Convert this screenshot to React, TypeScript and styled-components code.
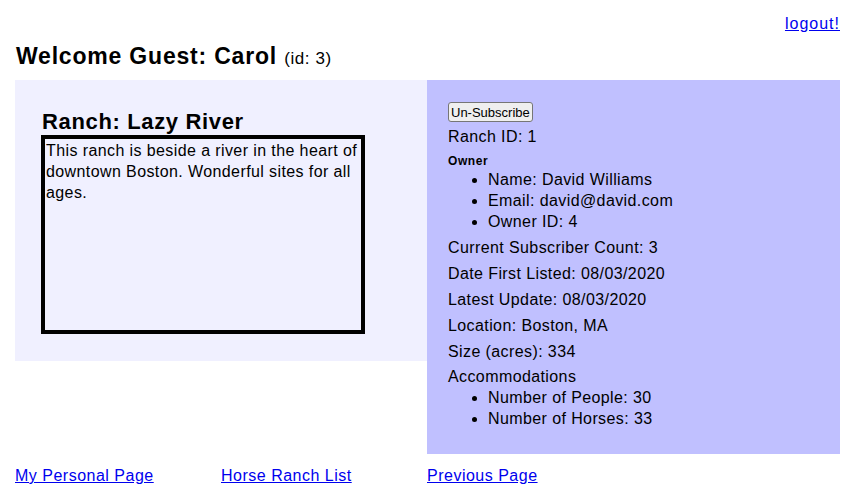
import React from 'react';
import styled, { createGlobalStyle } from 'styled-components';

const GlobalStyle = createGlobalStyle`
  body {
    margin: 0;
    background: #ffffff;
    color: #000000;
    font-family: 'Liberation Sans', Arial, sans-serif;
    letter-spacing: 0.4px;
  }
`;

const Page = styled.div`
  padding: 14px 5px 0 15px;
`;

const TopBar = styled.div`
  display: flex;
  justify-content: flex-end;
  font-size: 16px;
  line-height: 20px;
`;

const NavLink = styled.a<{ $spacing?: number }>`
  color: #0000ee;
  text-decoration: underline;
  font-size: 16px;
  line-height: 20px;
  letter-spacing: ${({ $spacing }) => $spacing ?? 0.5}px;
  cursor: pointer;
`;

const Welcome = styled.h2`
  margin: 9px 0 8px 1px;
  font-size: 23px;
  line-height: 27px;
  font-weight: bold;
  letter-spacing: 0.8px;
`;

const UserId = styled.span`
  font-size: 17px;
  font-weight: normal;
  letter-spacing: 0.6px;
`;

const Columns = styled.div`
  display: grid;
  grid-template-columns: 412px 413px;
  align-items: start;
`;

const InfoPanel = styled.section`
  background: #f0f0ff;
  padding: 28px 27px 27px 26px;
`;

const RanchTitle = styled.h3`
  margin: 0 0 0 1px;
  font-size: 22px;
  line-height: 27px;
  font-weight: bold;
  letter-spacing: 0.65px;
`;

const DescriptionBox = styled.div`
  box-sizing: border-box;
  width: 324px;
  height: 199px;
  border: 4px solid #000000;
  padding: 1px 1px 0 1px;
  font-size: 16px;
  line-height: 21px;
`;

const DetailPanel = styled.section`
  background: #c0c0ff;
  padding: 22px 21px 25px 21px;
`;

const Button = styled.button`
  display: block;
  height: 20px;
  padding: 0 2px;
  font-family: inherit;
  font-size: 13px;
  letter-spacing: 0;
  background: #efefef;
  border: 1px solid #767676;
  border-radius: 3px;
`;

const Field = styled.div<{ $gap?: number }>`
  margin-top: ${({ $gap }) => $gap ?? 6}px;
  font-size: 16px;
  line-height: 20px;
`;

const SubHeading = styled.div`
  margin-top: 6px;
  font-size: 12px;
  line-height: 16px;
  font-weight: bold;
  letter-spacing: 0.6px;
`;

const List = styled.ul`
  margin: 0;
  padding-left: 40px;
  font-size: 16px;
  line-height: 21px;
`;

const Footer = styled.nav`
  display: grid;
  grid-template-columns: repeat(4, 206px);
  margin-top: 12px;
`;

const ownerDetails = ['Name: David Williams', 'Email: david@david.com', 'Owner ID: 4'];

const ranchFacts = [
  'Current Subscriber Count: 3',
  'Date First Listed: 08/03/2020',
  'Latest Update: 08/03/2020',
  'Location: Boston, MA',
  'Size (acres): 334',
];

const accommodations = ['Number of People: 30', 'Number of Horses: 33'];

const App: React.FC = () => (
  <Page>
    <GlobalStyle />
    <TopBar>
      <NavLink $spacing={1}>logout!</NavLink>
    </TopBar>
    <Welcome>
      Welcome Guest: Carol <UserId>(id: 3)</UserId>
    </Welcome>
    <Columns>
      <InfoPanel>
        <RanchTitle>Ranch: Lazy River</RanchTitle>
        <DescriptionBox>
          This ranch is beside a river in the heart of downtown Boston. Wonderful sites for all ages.
        </DescriptionBox>
      </InfoPanel>
      <DetailPanel>
        <Button>Un-Subscribe</Button>
        <Field $gap={5}>Ranch ID: 1</Field>
        <SubHeading>Owner</SubHeading>
        <List>
          {ownerDetails.map((d) => (
            <li key={d}>{d}</li>
          ))}
        </List>
        {ranchFacts.map((f) => (
          <Field key={f}>{f}</Field>
        ))}
        <Field $gap={5}>Accommodations</Field>
        <List>
          {accommodations.map((a) => (
            <li key={a}>{a}</li>
          ))}
        </List>
      </DetailPanel>
    </Columns>
    <Footer>
      <NavLink>My Personal Page</NavLink>
      <NavLink>Horse Ranch List</NavLink>
      <NavLink>Previous Page</NavLink>
    </Footer>
  </Page>
);

export default App;
